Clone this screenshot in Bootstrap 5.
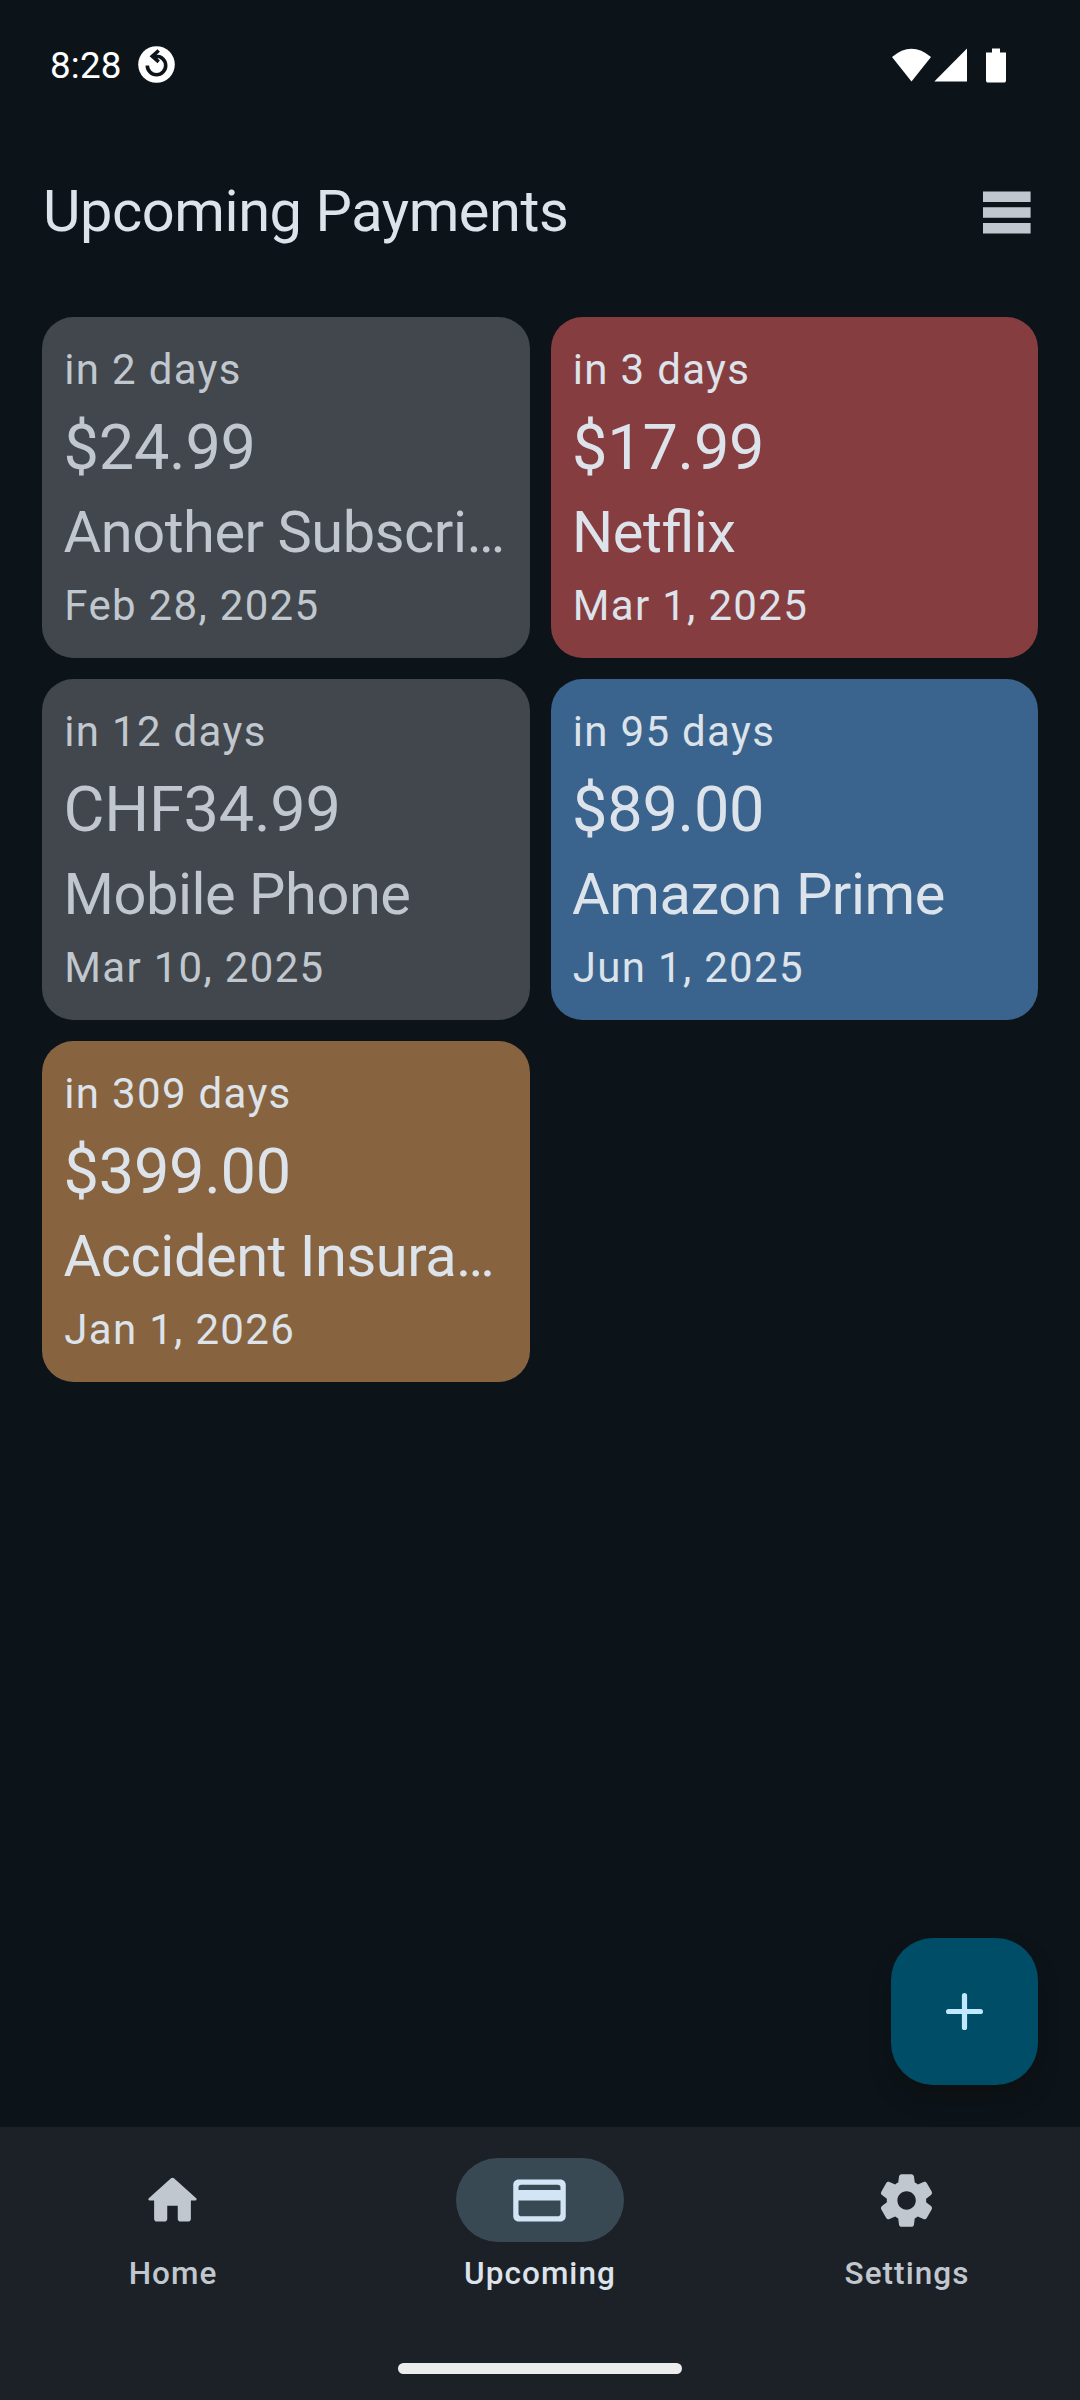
<!DOCTYPE html>
<html lang="en" data-bs-theme="dark">
<head>
<meta charset="utf-8">
<meta name="viewport" content="width=device-width, initial-scale=1">
<title>Upcoming Payments</title>
<link href="https://cdn.jsdelivr.net/npm/bootstrap@5.3.0/dist/css/bootstrap.min.css" rel="stylesheet">
<style>
  body { background: #0c141a; font-family: Roboto, "Noto Sans", sans-serif; color: #dde3ea; }
  svg { display: block; flex: none; }
  .screen { width: 1080px; height: 2400px; overflow: hidden; }
  .status-bar { height: 132px; padding: 0 73px 3px 50px; color: #fff; font-size: 36.75px; }
  .status-bar .clock { line-height: 43px; margin-top: 2px; letter-spacing: .2px; }
  .status-bar .notice { margin-left: 16px; }
  .status-bar .signals { margin-top: 2px; }
  .app-bar { height: 160px; padding: 0 48px 0 43px; }
  .app-title { font-size: 57.75px; line-height: 73.5px; font-weight: 400; letter-spacing: -.43px; color: #dde3ea; }
  .payments { display: grid; grid-template-columns: 1fr 1fr; gap: 21px; padding: 25px 42px 0; }
  .payment { --bs-card-bg: #41474d; --bs-card-color: #c1c7ce; height: 341px; border: 0; border-radius: 31.5px; padding: 21px 21px 21px 21.6px; gap: 5.25px; color: var(--bs-card-color); min-width: 0; }
  .payment.tinted { --bs-card-color: #dde3ea; }
  .tint-red { --bs-card-bg: #863d40; }
  .tint-blue { --bs-card-bg: #3a638d; }
  .tint-brown { --bs-card-bg: #87643f; }
  .when, .due { font-size: 42px; line-height: 63px; letter-spacing: 1.3125px; padding-left: .7px; }
  .price { font-size: 63px; line-height: 84px; letter-spacing: -.25px; }
  .payee { font-size: 57.75px; line-height: 73.5px; letter-spacing: -.47px; font-feature-settings: "liga" 1; }
  .fab { position: absolute; right: 42px; bottom: 42px; width: 147px; height: 147px; border: 0; border-radius: 42px; background: #004d67; color: #c0e8ff; box-shadow: 0 14px 20px -2px rgba(14,15,15,.75); }
  .bottom-nav { height: 273px; background: #1c2027; }
  .tabs { gap: 21px; padding-top: 31px; }
  .tab { color: #c1c7ce; font-size: 31.5px; line-height: 42px; font-weight: 500; letter-spacing: 1.05px; }
  .tab-icon { width: 168px; height: 84px; border-radius: 42px; margin-bottom: 11px; padding-right: 1px; }
  .tab.current { color: #dde3ea; }
  .tab.current .tab-icon { background: #384954; color: #d3e5f5; }
  .gesture-bar { width: 284px; height: 11px; border-radius: 6px; background: #ececec; margin-bottom: 26px; }
</style>
</head>
<body>
<div class="screen d-flex flex-column">
  <header class="status-bar d-flex align-items-center">
    <span class="clock">8:28</span>
    <svg class="notice" width="37" height="37" viewBox="-18.5 -18.5 37 37"><circle r="18.3" fill="#fff"/><path d="M-9.2 1A9.2 9.2 0 1 0 0-8.2H-3M2.2-14-4.2-8.3 2.2-2.7" fill="none" stroke="#0c141a" stroke-width="3.6"/></svg>
    <svg class="signals ms-auto" width="115" height="36" viewBox="0 0 115 36" fill="#fff">
      <path d="M0 9Q19.5-7.5 39 9L19.5 33.5z"/>
      <path d="M42.300 33.500 75 .5v33z"/>
      <path d="M100 .5h8v4h6V33l-1 1.500H95L94 33V4.500h6z"/>
    </svg>
  </header>

  <div class="app-bar d-flex align-items-center justify-content-between">
    <h1 class="app-title m-0">Upcoming Payments</h1>
    <svg width="49" height="43" viewBox="0 0 49 43" fill="#c1c7ce"><path d="M0 .4h47.600v10.600H0zM0 16.200h47.600v10.600H0zM0 32h47.600v10.600H0z"/></svg>
  </div>

  <main class="position-relative flex-grow-1">
    <div class="payments">
      <div class="card payment">
        <div class="when">in 2 days</div><div class="price">$24.99</div>
        <div class="payee text-nowrap">Another Subscri…</div><div class="due">Feb 28, 2025</div>
      </div>
      <div class="card payment tinted tint-red">
        <div class="when">in 3 days</div><div class="price">$17.99</div>
        <div class="payee text-nowrap">Netflix</div><div class="due">Mar 1, 2025</div>
      </div>
      <div class="card payment">
        <div class="when">in 12 days</div><div class="price">CHF34.99</div>
        <div class="payee text-nowrap">Mobile Phone</div><div class="due">Mar 10, 2025</div>
      </div>
      <div class="card payment tinted tint-blue">
        <div class="when">in 95 days</div><div class="price">$89.00</div>
        <div class="payee text-nowrap">Amazon Prime</div><div class="due">Jun 1, 2025</div>
      </div>
      <div class="card payment tinted tint-brown">
        <div class="when">in 309 days</div><div class="price">$399.00</div>
        <div class="payee text-nowrap">Accident Insura…</div><div class="due">Jan 1, 2026</div>
      </div>
    </div>
    <button class="fab d-flex align-items-center justify-content-center p-0" aria-label="Add">
      <svg width="37" height="37" viewBox="0 0 37 37"><path d="M18.500 2.600v31.800M2.600 18.500h31.800" stroke="currentColor" stroke-width="5.2" stroke-linecap="round"/></svg>
    </button>
  </main>

  <footer class="bottom-nav d-flex flex-column align-items-center justify-content-between">
    <nav class="tabs d-flex w-100">
      <div class="tab d-flex flex-column align-items-center flex-fill w-100">
        <span class="tab-icon d-flex align-items-center justify-content-center"><svg width="63" height="63" viewBox="0 0 24 24" fill="currentColor"><path d="M10 19v-5h4v5c0 .55.45 1 1 1h3c.55 0 1-.45 1-1v-7h1.700c.46 0 .68-.57.33-.87L12.670 3.600c-.38-.34-.96-.34-1.340 0l-8.360 7.530c-.34.3-.13.87.33.87H5v7c0 .55.45 1 1 1h3c.55 0 1-.45 1-1z"/></svg></span>
        <span>Home</span>
      </div>
      <div class="tab current d-flex flex-column align-items-center flex-fill w-100">
        <span class="tab-icon d-flex align-items-center justify-content-center"><svg width="63" height="63" viewBox="0 0 24 24" fill="currentColor" fill-rule="evenodd"><path d="M20 4H4c-1.110 0-2 .89-2 2v12c0 1.110.89 2 2 2h16c1.110 0 2-.89 2-2V6c0-1.110-.89-2-2-2zM4 8V7c0-.55.45-1 1-1h14c.55 0 1 .45 1 1v1zM4 12h16v5c0 .55-.45 1-1 1H5c-.55 0-1-.45-1-1z"/></svg></span>
        <span>Upcoming</span>
      </div>
      <div class="tab d-flex flex-column align-items-center flex-fill w-100">
        <span class="tab-icon d-flex align-items-center justify-content-center"><svg width="63" height="63" viewBox="0 0 24 24" fill="currentColor"><path d="M19.500 12c0-.23-.01-.45-.03-.68l1.860-1.410c.4-.3.51-.86.26-1.300l-1.870-3.230c-.25-.44-.79-.62-1.250-.42l-2.150.91c-.37-.26-.76-.49-1.170-.68l-.29-2.310C14.800 2.380 14.370 2 13.870 2h-3.730c-.51 0-.94.38-1 .88l-.29 2.310c-.41.19-.8.42-1.170.68l-2.150-.91c-.46-.2-1-.02-1.250.42L2.410 8.620c-.25.44-.14.99.26 1.300l1.860 1.410C4.510 11.550 4.500 11.770 4.500 12s.01.45.03.68l-1.860 1.410c-.4.3-.51.86-.26 1.300l1.870 3.230c.25.44.79.62 1.250.42l2.150-.91c.37.26.76.49 1.170.68l.29 2.310c.06.5.49.88.99.88h3.730c.5 0 .93-.38.99-.88l.29-2.310c.41-.19.8-.42 1.170-.68l2.150.91c.46.2 1 .02 1.250-.42l1.870-3.230c.25-.44.14-.99-.26-1.300l-1.860-1.410C19.490 12.450 19.500 12.230 19.500 12zM12.040 15.500c-1.930 0-3.500-1.570-3.500-3.500s1.570-3.500 3.500-3.500 3.500 1.570 3.500 3.500S13.970 15.500 12.040 15.500z"/></svg></span>
        <span>Settings</span>
      </div>
    </nav>
    <div class="gesture-bar"></div>
  </footer>
</div>
<script src="https://cdn.jsdelivr.net/npm/bootstrap@5.3.0/dist/js/bootstrap.bundle.min.js"></script>
</body>
</html>
